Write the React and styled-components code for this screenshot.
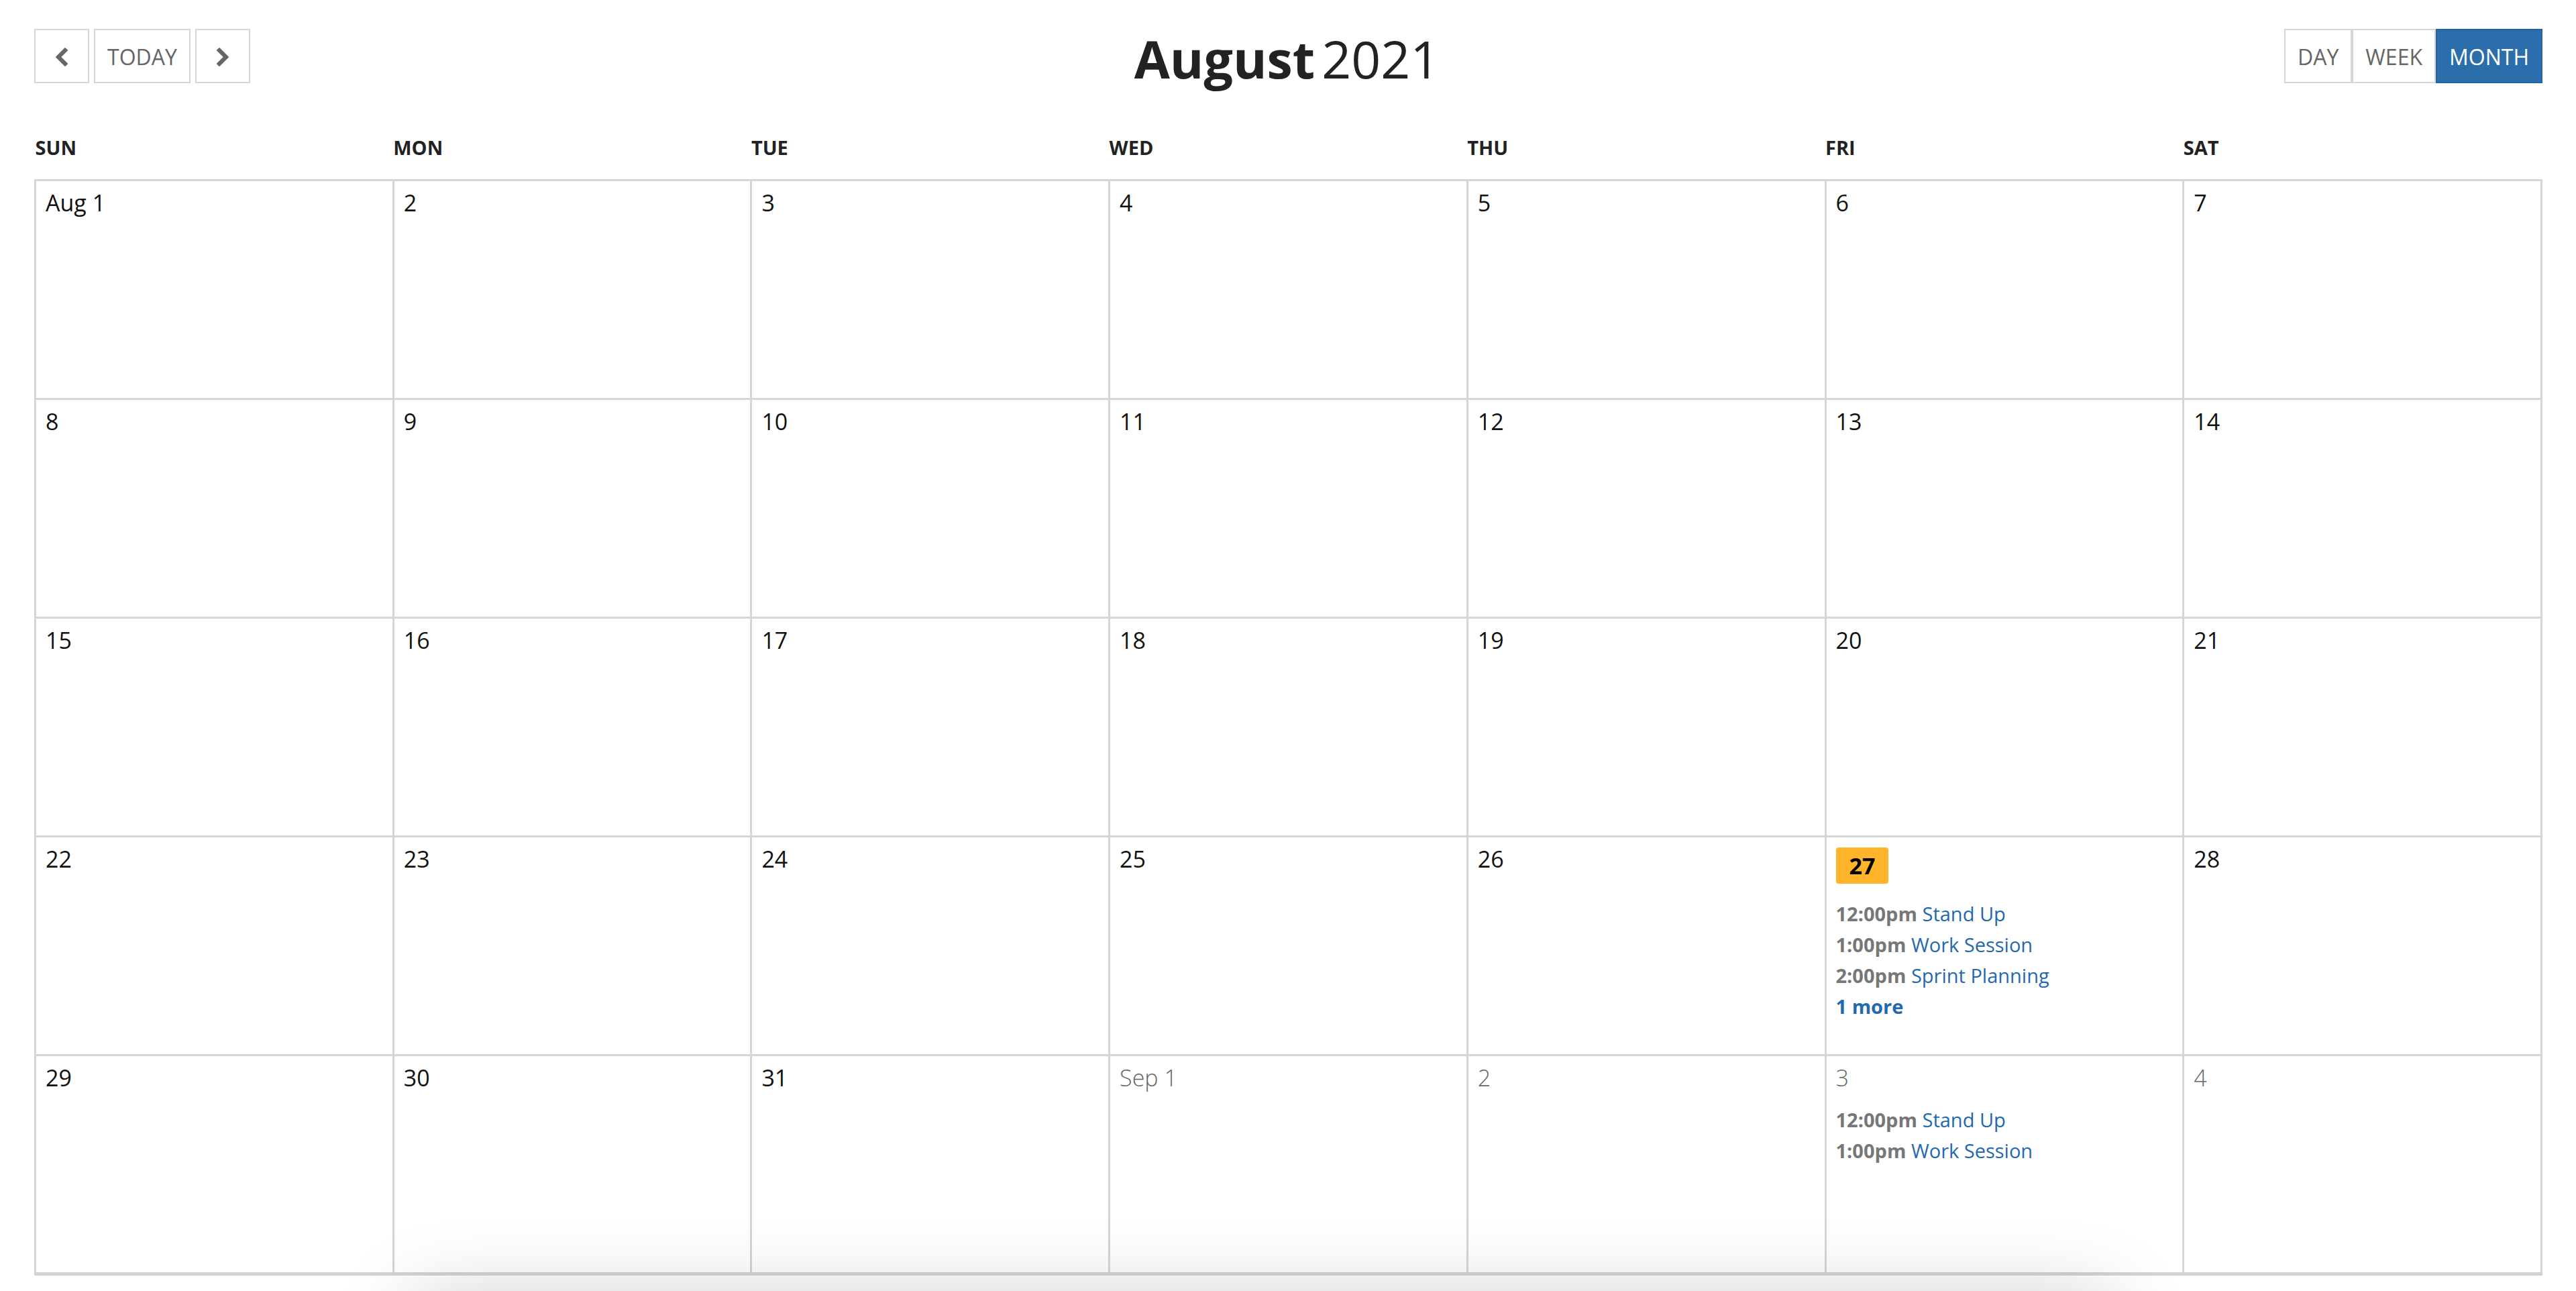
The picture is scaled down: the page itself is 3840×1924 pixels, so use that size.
import React from "react";
import styled, { createGlobalStyle } from "styled-components";

const GlobalStyle = createGlobalStyle`
  body {
    margin: 0;
    background: #fff;
    color: #222;
    font-family: "Open Sans", sans-serif;
    overflow-x: hidden;
  }
  * {
    box-sizing: border-box;
  }
`;

const Page = styled.div`
  position: relative;
  min-height: 100vh;
  padding: 43px 50px 20px 51px;
  overflow: hidden;
`;

const Toolbar = styled.header`
  display: grid;
  grid-template-columns: 1fr auto 1fr;
  align-items: start;
`;

const ButtonGroup = styled.div`
  display: flex;
  gap: ${({ $joined }) => ($joined ? "0" : "7px")};
  justify-self: ${({ $joined }) => ($joined ? "end" : "start")};
`;

const Button = styled.button`
  display: flex;
  align-items: center;
  justify-content: center;
  min-width: 82px;
  height: 81px;
  padding: 3px 18px 0;
  border: 2px solid ${({ $active }) => ($active ? "#1f65a6" : "#d6d6d6")};
  border-radius: 0;
  background: ${({ $active }) => ($active ? "#2c6eac" : "#fff")};
  color: ${({ $active }) => ($active ? "#fff" : "#666")};
  font-family: inherit;
  font-size: 32px;
  font-weight: 500;
  line-height: 44px;
  cursor: pointer;
`;

const Title = styled.h1`
  display: flex;
  gap: 10px;
  margin: 0;
  padding-right: 4px;
  font-size: 77px;
  font-weight: 700;
  line-height: 90px;
`;

const Year = styled.span`
  font-weight: 400;
`;

const Month = styled.table`
  width: 100%;
  margin-top: 67px;
  table-layout: fixed;
  border-collapse: collapse;
  border-bottom: 5px solid #d3d3d3;
`;

const Weekday = styled.th`
  height: 68px;
  padding: 0;
  font-size: 29px;
  font-weight: 700;
  line-height: 40px;
  text-align: left;
  vertical-align: top;
`;

const Day = styled.td`
  height: 326px;
  padding: 9px 14px;
  border: 3px solid #d6d6d6;
  vertical-align: top;
`;

const DayNumber = styled.time`
  display: block;
  color: ${({ $muted }) => ($muted ? "#666" : "#111")};
  font-size: 34px;
  font-weight: ${({ $muted }) => ($muted ? 300 : 400)};
  line-height: 46px;
`;

const Today = styled(DayNumber)`
  width: fit-content;
  margin-top: 6px;
  padding: 4px 20px;
  border-radius: 4px;
  background: #ffb429;
  color: #000;
  font-weight: 700;
`;

const Events = styled.ul`
  margin: ${({ $spaced }) => ($spaced ? "22px" : "17px")} 0 0;
  padding: 0;
  list-style: none;
  font-size: 29px;
  line-height: 46px;
`;

const Time = styled.span`
  color: #777;
  font-weight: 700;
`;

const EventLink = styled.a`
  color: #2269ad;
  font-weight: ${({ $bold }) => ($bold ? 700 : 400)};
  text-decoration: none;
`;

// soft shadow that rises from below the fold
const BottomShadow = styled.div`
  position: absolute;
  top: 100%;
  left: 16%;
  right: 18%;
  height: 200px;
  box-shadow: 0 10px 120px rgba(0, 0, 0, 0.2);
  pointer-events: none;
`;

const weekdays = ["Sun", "Mon", "Tue", "Wed", "Thu", "Fri", "Sat"];
const views = ["DAY", "WEEK", "MONTH"];

const events = {
  "2021-08-27": {
    items: [
      ["12:00pm", "Stand Up"],
      ["1:00pm", "Work Session"],
      ["2:00pm", "Sprint Planning"],
    ],
    more: 1,
  },
  "2021-09-03": {
    items: [
      ["12:00pm", "Stand Up"],
      ["1:00pm", "Work Session"],
    ],
  },
};

const pad = (n) => String(n).padStart(2, "0");

const days = Array.from({ length: 35 }, (_, i) => {
  const next = i >= 31;
  const number = next ? i - 30 : i + 1;
  const prefix = next ? "Sep " : "Aug ";
  return {
    iso: `2021-${next ? "09" : "08"}-${pad(number)}`,
    label: number === 1 ? prefix + number : number,
    muted: next,
    today: i === 26,
  };
});

const weeks = [0, 7, 14, 21, 28].map((start) => days.slice(start, start + 7));

function Chevron({ right }) {
  return (
    <svg width="20" height="30" viewBox="0 0 20 30" aria-hidden="true">
      <path
        d={
          right
            ? "M18.3 15 L5 1.7 L1.6 5 L11.7 15 L1.6 25 L5 28.3 Z"
            : "M1.7 15 L15 1.7 L18.4 5 L8.3 15 L18.4 25 L15 28.3 Z"
        }
        fill="currentColor"
        stroke="currentColor"
        strokeWidth="1.5"
        strokeLinejoin="round"
      />
    </svg>
  );
}

function DayCell({ iso, label, muted, today }) {
  const Label = today ? Today : DayNumber;
  const entry = events[iso];
  return (
    <Day>
      <Label dateTime={iso} $muted={muted}>
        {label}
      </Label>
      {entry && (
        <Events $spaced={today}>
          {entry.items.map(([time, name]) => (
            <li key={time}>
              <Time>{time}</Time> <EventLink href="#event">{name}</EventLink>
            </li>
          ))}
          {entry.more && (
            <li>
              <EventLink href="#more" $bold>
                {entry.more} more
              </EventLink>
            </li>
          )}
        </Events>
      )}
    </Day>
  );
}

export default function App() {
  return (
    <Page>
      <GlobalStyle />
      <Toolbar>
        <ButtonGroup>
          <Button type="button" aria-label="Previous month">
            <Chevron />
          </Button>
          <Button type="button">TODAY</Button>
          <Button type="button" aria-label="Next month">
            <Chevron right />
          </Button>
        </ButtonGroup>
        <Title>
          August <Year>2021</Year>
        </Title>
        <ButtonGroup $joined>
          {views.map((view) => (
            <Button key={view} type="button" $active={view === "MONTH"}>
              {view}
            </Button>
          ))}
        </ButtonGroup>
      </Toolbar>
      <Month>
        <thead>
          <tr>
            {weekdays.map((name) => (
              <Weekday key={name} scope="col">
                {name.toUpperCase()}
              </Weekday>
            ))}
          </tr>
        </thead>
        <tbody>
          {weeks.map((week) => (
            <tr key={week[0].iso}>
              {week.map((day) => (
                <DayCell key={day.iso} {...day} />
              ))}
            </tr>
          ))}
        </tbody>
      </Month>
      <BottomShadow />
    </Page>
  );
}
